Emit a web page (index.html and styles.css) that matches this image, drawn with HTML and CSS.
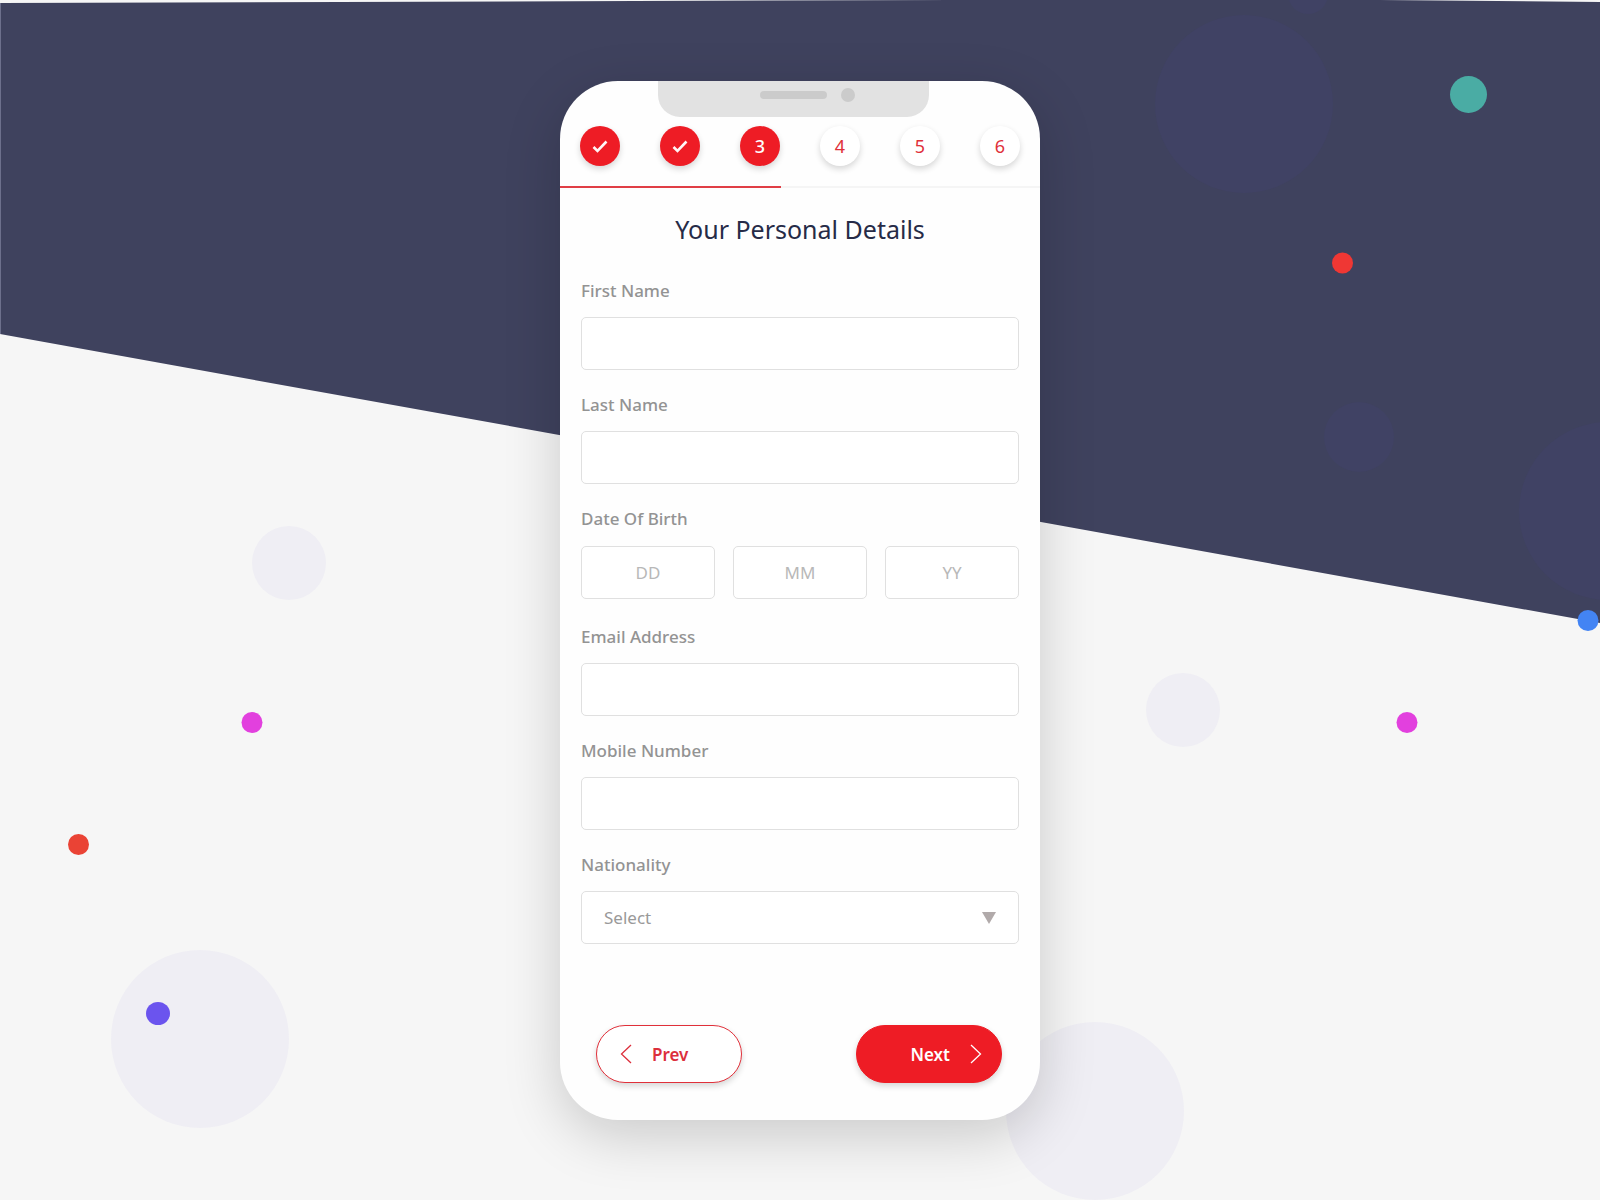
FILE: index.html
```html
<!DOCTYPE html>
<html lang="en">
<head>
  <meta charset="utf-8">
  <meta name="viewport" content="width=device-width, initial-scale=1">
  <title>Your Personal Details</title>
  <link rel="stylesheet" href="styles.css">
</head>
<body>
  <svg class="backdrop" viewBox="0 0 1600 1200" preserveAspectRatio="xMidYMid slice" aria-hidden="true">
    <path fill="#3f425e" d="M0 3 955 0H1380L1600 2V623L0 334Z"/>
    <path fill="#6d708c" d="M0 3h1v331H0z"/>
    <g fill="#404264">
      <circle cx="1244" cy="104" r="89"/>
      <circle cx="1308" cy="-6" r="20"/>
      <circle cx="1359" cy="437" r="35"/>
      <circle cx="1608" cy="511" r="89"/>
    </g>
    <g fill="#efeef4">
      <circle cx="289" cy="563" r="37"/>
      <circle cx="1183" cy="710" r="37"/>
      <circle cx="200" cy="1039" r="89"/>
      <circle cx="1095" cy="1111" r="89"/>
    </g>
    <circle cx="1468.500" cy="94.500" r="18.500" fill="#4aaca4"/>
    <circle cx="1342.500" cy="263" r="10.500" fill="#ef3734"/>
    <circle cx="1588" cy="620.500" r="10.500" fill="#4384f4"/>
    <circle cx="252" cy="722.500" r="10.500" fill="#e240de"/>
    <circle cx="1407" cy="722.500" r="10.500" fill="#e240de"/>
    <circle cx="78.500" cy="844.500" r="10.500" fill="#ea4335"/>
    <ellipse cx="158" cy="1013.500" rx="12" ry="11.500" fill="#6b54ee"/>
  </svg>

  <main class="stage">
    <form class="phone">
      <header class="top">
        <div class="notch"><span class="speaker"></span><span class="camera"></span></div>
        <ol class="steps">
          <li class="step done"><svg width="16" height="14" viewBox="0 0 16 14" role="img" aria-label="Step 1 done"><path d="M1.500 8l4 4L14.500 2.500"/></svg></li>
          <li class="step done"><svg width="16" height="14" viewBox="0 0 16 14" role="img" aria-label="Step 2 done"><path d="M1.500 8l4 4L14.500 2.500"/></svg></li>
          <li class="step done" aria-current="step">3</li>
          <li class="step">4</li>
          <li class="step">5</li>
          <li class="step">6</li>
        </ol>
        <div class="progress"><div class="progress-fill"></div></div>
      </header>

      <h1 class="title">Your Personal Details</h1>

      <div class="fields">
        <div class="field">
          <label class="label" for="first">First Name</label>
          <input class="control" id="first" type="text">
        </div>
        <div class="field">
          <label class="label" for="last">Last Name</label>
          <input class="control" id="last" type="text">
        </div>
        <div class="field" role="group" aria-labelledby="dob">
          <label class="label" id="dob" for="day">Date Of Birth</label>
          <div class="dates">
            <input class="control date" id="day" type="text" placeholder="DD" aria-label="Day">
            <input class="control date" type="text" placeholder="MM" aria-label="Month">
            <input class="control date" type="text" placeholder="YY" aria-label="Year">
          </div>
        </div>
        <div class="field">
          <label class="label" for="email">Email Address</label>
          <input class="control" id="email" type="email">
        </div>
        <div class="field">
          <label class="label" for="mobile">Mobile Number</label>
          <input class="control" id="mobile" type="tel">
        </div>
        <div class="field">
          <label class="label" for="nation">Nationality</label>
          <div class="select-wrap">
            <select class="control select" id="nation"><option>Select</option></select>
            <svg class="caret" width="14" height="12" viewBox="0 0 14 12" aria-hidden="true"><path fill="#b1aaaa" d="M0 0h14L7 12z"/></svg>
          </div>
        </div>
      </div>

      <footer class="actions">
        <button class="btn prev" type="button">
          <svg class="chevron" width="12" height="20" viewBox="0 0 12 20" aria-hidden="true"><path d="M11 1 1.500 10 11 19"/></svg>
          Prev
        </button>
        <button class="btn next" type="submit">
          Next
          <svg class="chevron" width="12" height="20" viewBox="0 0 12 20" aria-hidden="true"><path d="M1 1l9.500 9L1 19"/></svg>
        </button>
      </footer>
    </form>
  </main>
</body>
</html>
```

FILE: styles.css
```css
* {
  box-sizing: border-box;
}

body {
  margin: 0;
  min-height: 100vh;
  position: relative;
  overflow-x: hidden;
  background: #f6f6f6;
  font-family: "Noto Sans", "Open Sans", sans-serif;
}

.backdrop {
  position: absolute;
  top: 0;
  left: 0;
  width: 100%;
  height: 100%;
}

.stage {
  position: relative;
  display: flex;
  justify-content: center;
  padding: 81px 0 80px;
}

.phone {
  width: 100%;
  max-width: 480px;
  overflow: hidden;
  border-radius: 58px;
  background: #fefefe;
  box-shadow: 0 16px 56px rgba(0, 0, 0, 0.18);
}

.top {
  display: flex;
  flex-direction: column;
}

.notch {
  display: flex;
  gap: 14px;
  width: 271px;
  height: 36px;
  margin-left: 98px;
  padding: 7px 0 0 102px;
  border-radius: 0 0 22px 22px;
  background: #e2e2e2;
}

.speaker {
  width: 67px;
  height: 8px;
  margin-top: 3px;
  border-radius: 4px;
  background: #cbcbcb;
}

.camera {
  width: 14px;
  height: 14px;
  border-radius: 50%;
  background: #cbcbcb;
}

.steps {
  display: flex;
  justify-content: space-between;
  margin: 0;
  padding: 9px 20px 20px;
  list-style: none;
}

.step {
  display: flex;
  align-items: center;
  justify-content: center;
  width: 40px;
  height: 40px;
  border-radius: 50%;
  background: #fff;
  box-shadow: 0 3px 6px rgba(0, 0, 0, 0.16);
  color: #e0303a;
  font-size: 18px;
  line-height: 24px;
}

.step.done {
  background: #ee1c25;
  color: #fff;
  font-weight: 500;
}

.step path {
  fill: none;
  stroke: #fff5f5;
  stroke-width: 2.600;
}

.progress {
  height: 2px;
  background: #f5f5f5;
}

.progress-fill {
  width: 46%;
  height: 2px;
  background: #e03e45;
}

.title {
  margin: 25px 0 34px;
  color: #262b47;
  font-size: 25px;
  font-weight: 400;
  line-height: 32px;
  text-align: center;
}

.fields {
  display: flex;
  flex-direction: column;
  gap: 22px;
  padding: 0 21px;
}

.field {
  display: flex;
  flex-direction: column;
  gap: 14px;
  padding-bottom: 1px;
}

.label {
  color: #939393;
  font-size: 17px;
  font-weight: 500;
  line-height: 24px;
}

.control {
  width: 100%;
  height: 53px;
  padding: 0 22px;
  border: 1px solid #e0e0e0;
  border-radius: 5px;
  background: #fff;
  color: #999;
  font-family: inherit;
  font-size: 17px;
}

.dates {
  display: grid;
  grid-template-columns: repeat(3, 1fr);
  gap: 18px;
  padding: 1px 0 3px;
}

.date {
  text-align: center;
}

.date::placeholder {
  color: #b8b8b8;
  opacity: 1;
}

.select-wrap {
  display: grid;
  align-items: center;
}

.select-wrap > * {
  grid-area: 1 / 1;
}

.select {
  appearance: none;
}

.caret {
  justify-self: end;
  margin-right: 23px;
  pointer-events: none;
}

.actions {
  display: flex;
  justify-content: space-between;
  padding: 80px 38px 37px 36px;
}

.btn {
  display: flex;
  align-items: center;
  gap: 20px;
  width: 146px;
  height: 58px;
  padding: 0 23px;
  border: 1px solid #e0303a;
  border-radius: 29px;
  background: #fff;
  box-shadow: 0 3px 6px rgba(0, 0, 0, 0.16);
  color: #dc2f3c;
  font-family: inherit;
  font-size: 17px;
  font-weight: 600;
}

.next {
  justify-content: flex-end;
  padding-right: 19px;
  border-color: #ee1c25;
  background: #ee1c25;
  color: #fff;
}

.chevron path {
  fill: none;
  stroke: currentColor;
  stroke-width: 1.300;
}
```
